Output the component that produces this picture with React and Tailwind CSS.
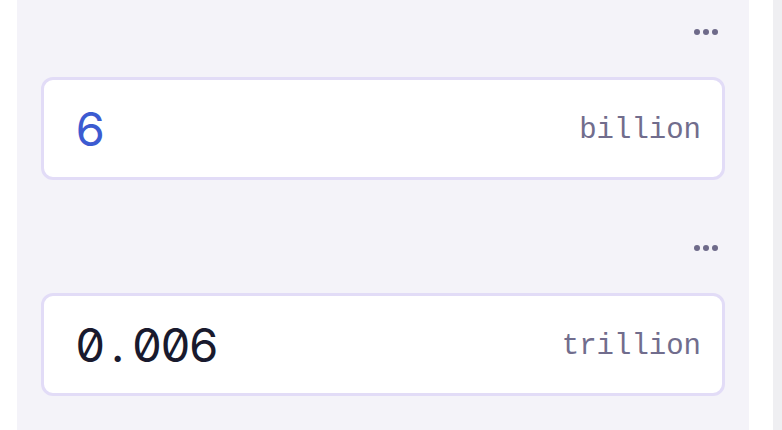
import { Fragment } from 'react';

const rows = [
  { value: '6', unit: 'billion', active: true },
  { value: '0.006', unit: 'trillion', active: false },
];

const Dots = () => (
  <div className="flex h-5 items-center justify-end pr-[7px]">
    <div className="flex gap-[3px]">
      <span className="h-[6px] w-[6px] rounded-full bg-[#6e6a8a]" />
      <span className="h-[6px] w-[6px] rounded-full bg-[#6e6a8a]" />
      <span className="h-[6px] w-[6px] rounded-full bg-[#6e6a8a]" />
    </div>
  </div>
);

// number is drawn on a fixed grid so it reads like a mono face with a slashed zero
const Value = ({ text, active }) => (
  <span
    className={`flex font-['Inter',sans-serif] text-[47px] font-normal leading-none tabular-nums slashed-zero ${
      active ? 'text-[#3c5bd1]' : 'text-[#191a2e]'
    }`}
  >
    {text.split('').map((ch, i) => (
      <span key={i} className="inline-block w-[28.4px] text-center">
        {ch}
      </span>
    ))}
  </span>
);

const App = () => {
  return (
    <div className="flex h-[430px] w-[782px] overflow-hidden bg-white font-['Liberation_Mono',monospace]">
      {/* converter panel */}
      <div className="ml-[17px] flex w-[732px] flex-col gap-[58px] bg-[#f4f3f9] px-6 pt-[22px]">
        {rows.map((row) => (
          <Fragment key={row.unit}>
            <div className="flex flex-col gap-[35px]">
              <Dots />
              <div className="flex h-[103px] items-center justify-between rounded-[12px] border-[3px] border-[#e2dcf7] bg-white pl-[31px] pr-[21px]">
                <Value text={row.value} active={row.active} />
                <span className="mb-[-4px] text-[29px] leading-none text-[#716d8d]">{row.unit}</span>
              </div>
            </div>
          </Fragment>
        ))}
      </div>
      <div className="ml-auto w-[9px] bg-[#efeff2]" />
    </div>
  );
};

export default App;
